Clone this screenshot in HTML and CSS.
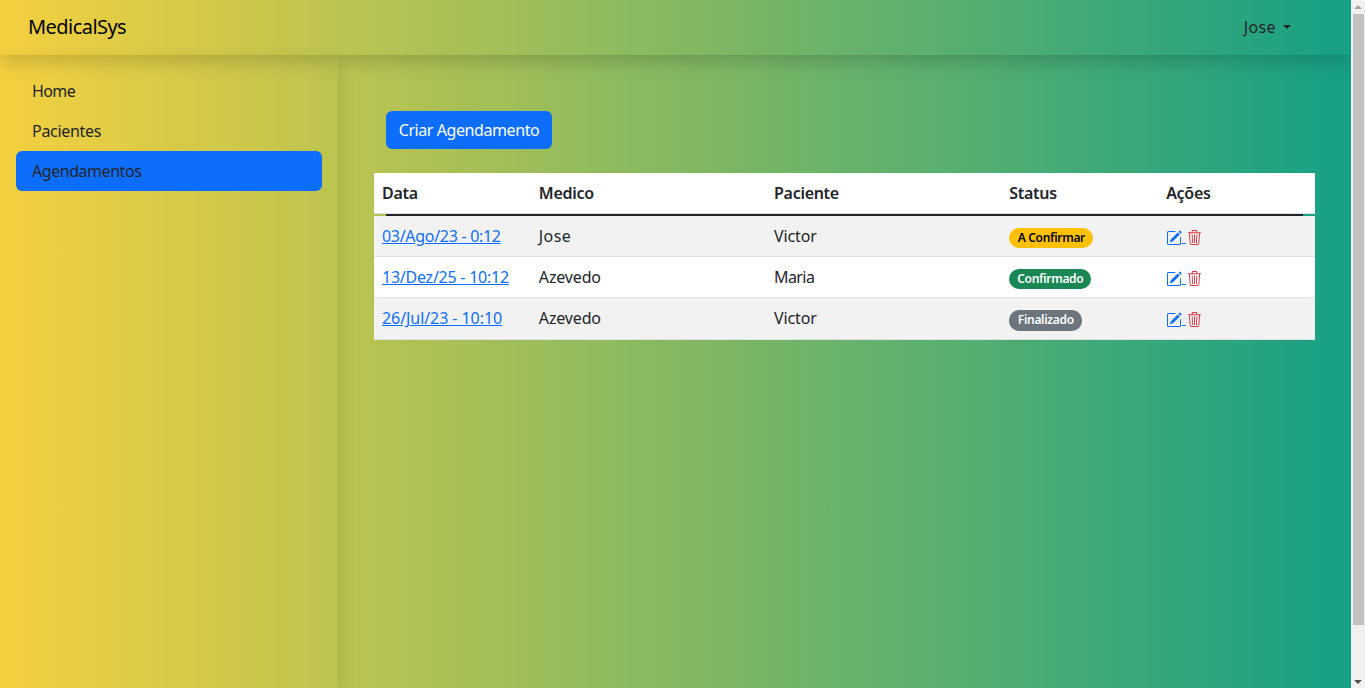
FILE: index.html
```html
<!DOCTYPE html>
<html lang="pt-BR">
<head>
<meta charset="utf-8">
<title>MedicalSys</title>
<link rel="stylesheet" href="styles.css">
</head>
<body>
<svg class="defs" width="0" height="0">
  <symbol id="pencil" viewBox="0 0 16 16"><path d="M15.502 1.94a.5.5 0 0 1 0 .706L14.459 3.69l-2-2L13.502.646a.5.5 0 0 1 .707 0l1.293 1.293zm-1.75 2.456-2-2L4.939 9.21a.5.5 0 0 0-.121.196l-.805 2.414a.25.25 0 0 0 .316.316l2.414-.805a.5.5 0 0 0 .196-.12l6.813-6.814z"/><path fill-rule="evenodd" d="M1 13.5A1.5 1.5 0 0 0 2.5 15h11a1.5 1.5 0 0 0 1.5-1.500v-6a.5.5 0 0 0-1 0v6a.5.5 0 0 1-.5.5h-11a.5.5 0 0 1-.5-.5v-11a.5.5 0 0 1 .5-.5H9a.5.5 0 0 0 0-1H2.500A1.500 1.500 0 0 0 1 2.500v11z"/></symbol>
  <symbol id="trash" viewBox="0 0 16 16"><path d="M6.500 1h3a.5.5 0 0 1 .5.5v1H6v-1a.5.5 0 0 1 .5-.5ZM11 2.500v-1A1.500 1.500 0 0 0 9.500 0h-3A1.500 1.500 0 0 0 5 1.500v1H2.506a.58.58 0 0 0-.01 0H1.500a.5.5 0 0 0 0 1h.538l.853 10.660A2 2 0 0 0 4.885 16h6.230a2 2 0 0 0 1.994-1.840l.853-10.660h.538a.5.5 0 0 0 0-1h-.995a.59.59 0 0 0-.01 0H11Zm1.958 1-.846 10.580a1 1 0 0 1-.997.920h-6.230a1 1 0 0 1-.997-.920L3.042 3.500h9.916Zm-7.487 1a.5.5 0 0 1 .528.470l.5 8.500a.5.5 0 0 1-.998.060L5 5.030a.5.5 0 0 1 .470-.530Zm5.058 0a.5.5 0 0 1 .470.530l-.5 8.500a.5.5 0 1 1-.998-.060l.5-8.500a.5.5 0 0 1 .528-.470ZM8 4.500a.5.5 0 0 1 .5.500v8.500a.5.5 0 0 1-1 0V5a.5.5 0 0 1 .5-.5Z"/></symbol>
</svg>
<div class="page">
  <header class="navbar">
    <a class="brand">MedicalSys</a>
    <a class="user"><span>Jose</span><i class="caret"></i></a>
  </header>
  <div class="columns">
    <nav class="sidebar">
      <a class="nav-link home">Home</a>
      <a class="nav-link">Pacientes</a>
      <a class="nav-link active">Agendamentos</a>
    </nav>
    <main class="content">
      <a class="btn">Criar Agendamento</a>
      <section class="table">
        <div class="row head"><div>Data</div><div>Medico</div><div>Paciente</div><div>Status</div><div>Ações</div></div>
        <div class="divider"></div>
        <div class="row odd">
          <div><a class="date">03/Ago/23 - 0:12</a></div><div class="short">Jose</div><div class="name">Victor</div>
          <div><span class="badge warning">A Confirmar</span></div>
          <div class="actions"><a class="edit"><svg><use href="#pencil"/></svg><i></i></a><a class="delete"><svg><use href="#trash"/></svg></a></div>
        </div>
        <div class="row">
          <div><a class="date mid">13/Dez/25 - 10:12</a></div><div class="name">Azevedo</div><div class="tight">Maria</div>
          <div><span class="badge success">Confirmado</span></div>
          <div class="actions"><a class="edit"><svg><use href="#pencil"/></svg><i></i></a><a class="delete"><svg><use href="#trash"/></svg></a></div>
        </div>
        <div class="row odd last">
          <div><a class="date wide">26/Jul/23 - 10:10</a></div><div class="name">Azevedo</div><div class="name">Victor</div>
          <div><span class="badge secondary">Finalizado</span></div>
          <div class="actions"><a class="edit"><svg><use href="#pencil"/></svg><i></i></a><a class="delete"><svg><use href="#trash"/></svg></a></div>
        </div>
      </section>
    </main>
  </div>
</div>
<div class="scrollbar">
  <svg class="arrow up" viewBox="0 0 14 14"><path d="M3 9h8L7 5z"/></svg>
  <div class="thumb"></div>
  <svg class="arrow down" viewBox="0 0 14 14"><path d="M3 6h8l-4 4z"/></svg>
</div>
</body>
</html>
```

FILE: styles.css
```css
* { box-sizing: border-box; }
body {
  margin: 0;
  height: 688px;
  overflow: hidden;
  display: grid;
  grid-template-columns: 1351px 14px;
  font: 390 16px/24px "Noto Sans", "Open Sans", sans-serif;
  letter-spacing: -0.3px;
  color: #212529;
}
.defs { position: absolute; }
.page {
  display: flex;
  flex-direction: column;
  height: 688px;
  overflow: hidden;
  background: linear-gradient(to right, #f4d03f, #16a085);
}
.navbar {
  display: flex;
  align-items: center;
  justify-content: space-between;
  height: 55px;
  flex: none;
  padding: 0 60px 2px 28px;
  box-shadow: 0 8px 16px rgba(0, 0, 0, .15);
}
.brand { font-size: 20px; letter-spacing: -0.55px; color: #000; }
.user { display: flex; align-items: center; gap: 7px; letter-spacing: 0.4px; }
.caret { border: 4px solid transparent; border-top-color: #212529; border-bottom: 0; }
.columns { display: flex; flex: 1; }
.sidebar {
  width: 338px;
  padding: 16px;
  box-shadow: 0 8px 16px rgba(0, 0, 0, .15);
}
.nav-link { display: block; height: 40px; padding: 8px 16px; border-radius: 6px; }
.home { letter-spacing: -0.6px; }
.active { background: #0d6efd; letter-spacing: -0.45px; }
.content { flex: 1; padding: 56px 36px 0; }
.btn {
  display: block;
  width: 166px;
  height: 38px;
  margin-left: 12px;
  padding: 7px 0;
  text-align: center;
  letter-spacing: -0.42px;
  border-radius: 6px;
  background: #0d6efd;
  color: #fff;
}
.table { margin-top: 24px; }
.row {
  display: grid;
  grid-template-columns: 2fr 3fr 3fr 2fr 2fr;
  height: 41px;
  background: #fff;
  border-bottom: 1px solid #dee2e6;
}
.row > div { padding: 8px 0 0 8px; white-space: nowrap; }
.row > .short { letter-spacing: 0.4px; }
.row > .name { letter-spacing: -0.15px; }
.row > .tight { letter-spacing: -0.6px; }
.head { font-weight: 600; }
.divider { height: 2px; margin: 0 12px; background: #212529; }
.odd { background: #f2f2f2; }
.last { height: 42px; }
.date { color: #0d6efd; text-decoration: underline; }
.mid { letter-spacing: -0.24px; }
.wide { letter-spacing: -0.07px; }
.badge {
  display: block;
  width: 84px;
  height: 20px;
  margin-top: 4px;
  border-radius: 10px;
  text-align: center;
  font: 600 12px/19px "Noto Sans", "Open Sans", sans-serif;
  color: #fff;
}
.warning { background: #ffc107; color: #000; }
.success { width: 82px; background: #198754; }
.secondary { width: 73px; height: 21px; background: #6c757d; }
.row > .actions { display: flex; padding-top: 14px; }
.actions svg { display: block; width: 16px; height: 16px; fill: currentColor; }
.edit { display: flex; color: #0d6efd; }
.edit i { width: 4px; height: 1px; margin-top: 13px; background: currentColor; }
.delete { color: #dc3545; }
.actions .delete svg { width: 15px; height: 15px; margin-left: 0.5px; }
.scrollbar { display: flex; flex-direction: column; background: #f1f1f1; }
.arrow { width: 14px; height: 14px; fill: #a3a3a3; }
.down { margin-top: auto; fill: #505050; }
.thumb { height: 611px; margin: 0 1px 0 2px; background: #c1c1c1; }
```
